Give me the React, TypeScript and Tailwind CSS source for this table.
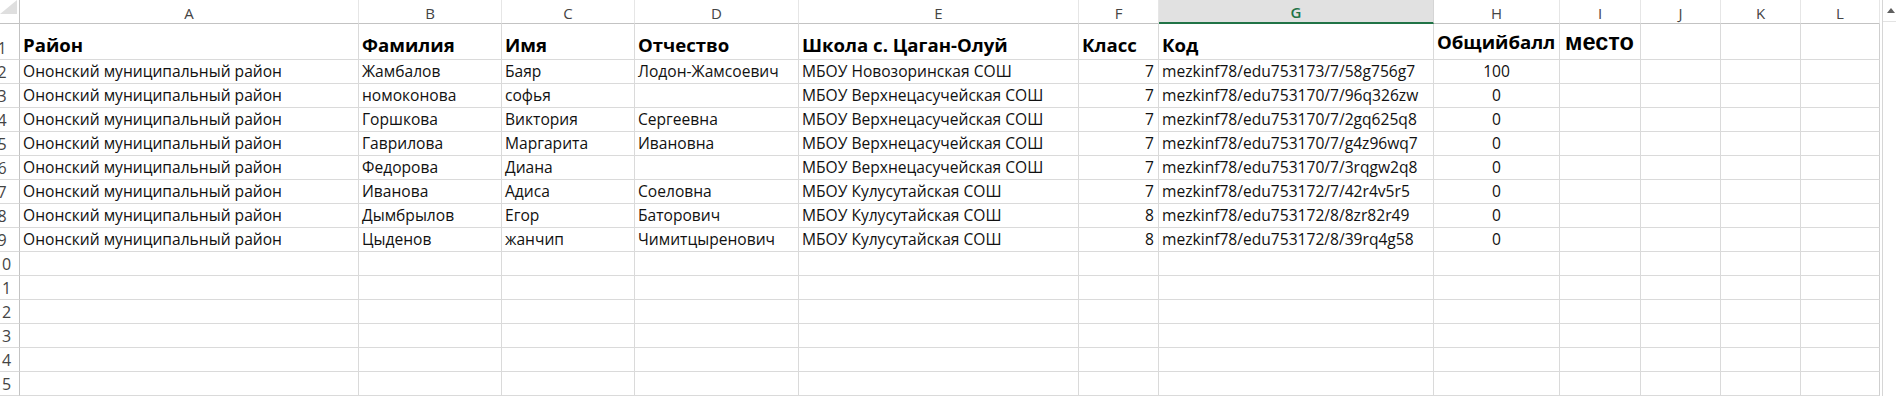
import React from "react";

const cols = ["A", "B", "C", "D", "E", "F", "G", "H", "I", "J", "K", "L"];

type Row = [string, string, string, string, string, string, string, string];

const rows: Row[] = [
  ["Ононский муниципальный район", "Жамбалов", "Баяр", "Лодон-Жамсоевич", "МБОУ Новозоринская СОШ", "7", "mezkinf78/edu753173/7/58g756g7", "100"],
  ["Ононский муниципальный район", "номоконова", "софья", "", "МБОУ Верхнецасучейская СОШ", "7", "mezkinf78/edu753170/7/96q326zw", "0"],
  ["Ононский муниципальный район", "Горшкова", "Виктория", "Сергеевна", "МБОУ Верхнецасучейская СОШ", "7", "mezkinf78/edu753170/7/2gq625q8", "0"],
  ["Ононский муниципальный район", "Гаврилова", "Маргарита", "Ивановна", "МБОУ Верхнецасучейская СОШ", "7", "mezkinf78/edu753170/7/g4z96wq7", "0"],
  ["Ононский муниципальный район", "Федорова", "Диана", "", "МБОУ Верхнецасучейская СОШ", "7", "mezkinf78/edu753170/7/3rqgw2q8", "0"],
  ["Ононский муниципальный район", "Иванова", "Адиса", "Соеловна", "МБОУ Кулусутайская СОШ", "7", "mezkinf78/edu753172/7/42r4v5r5", "0"],
  ["Ононский муниципальный район", "Дымбрылов", "Егор", "Баторович", "МБОУ Кулусутайская СОШ", "8", "mezkinf78/edu753172/8/8zr82r49", "0"],
  ["Ононский муниципальный район", "Цыденов", "жанчип", "Чимитцыренович", "МБОУ Кулусутайская СОШ", "8", "mezkinf78/edu753172/8/39rq4g58", "0"],
];

const headers = ["Район", "Фамилия", "Имя", "Отчество", "Школа с. Цаган-Олуй", "Класс", "Код", "Общийбалл"];

function RowNum({ n }: { n: number }) {
  return (
    <div className="flex items-end overflow-hidden border-r border-b border-r-[#c3c3c3] border-b-[#dadada] bg-white">
      <div className="ml-[-18px] w-[40px] shrink-0 pb-[1px] text-center text-[16px] leading-[20px] text-[#444]">{n}</div>
    </div>
  );
}

function Cell({ text, kind }: { text: string; kind: "l" | "r" | "c" }) {
  const align = kind === "r" ? "justify-end pr-[4px]" : kind === "c" ? "justify-center" : "justify-start pl-[3px]";
  return (
    <div className={`flex items-end whitespace-nowrap border-r border-b border-[#dadada] pb-[2px] text-[15.6px] leading-[20px] text-[#111] ${align}`}>
      {text}
    </div>
  );
}

export default function App() {
  return (
    <div className="flex h-[396px] w-[1896px] overflow-hidden bg-white" style={{ fontFamily: '"Open Sans", "Noto Sans", sans-serif' }}>
      <div className="grid grid-cols-[20px_339px_143px_133px_164px_280px_80px_275px_126px_81px_80px_80px_79px] grid-rows-[24px_36px_repeat(14,24px)]">
        {/* corner */}
        <div className="flex items-end justify-end border-r border-b border-r-[#c3c3c3] border-b-[#c3c3c3] bg-white">
          <svg width="19" height="19" viewBox="0 0 19 19" className="mb-[4px]">
            <polygon points="17,0 17,14 0,14" fill="#dfdfdf" />
          </svg>
        </div>
        {cols.map((c) =>
          c === "G" ? (
            <div key={c} className="flex items-center justify-center border-r border-r-[#d5d5d5] border-b-2 border-b-[#217346] bg-[#e1e1e1] pt-[2px] text-[15px] font-semibold text-[#217346]">
              {c}
            </div>
          ) : (
            <div key={c} className="flex items-center justify-center border-r border-b border-r-[#e6e6e6] border-b-[#c3c3c3] bg-white pt-[3px] text-[15px] text-[#444]">
              {c}
            </div>
          )
        )}

        {/* row 1 */}
        <RowNum n={1} />
        {headers.map((h, i) => (
          <div
            key={h}
            className={`flex items-end whitespace-nowrap border-r border-b border-[#dadada] pl-[3px] text-[18.6px] font-bold leading-[24px] text-black ${i === 7 ? "pb-[5px]" : "pb-[2px]"}`}
          >
            {h}
          </div>
        ))}
        <div
          className="flex items-end whitespace-nowrap border-r border-b border-[#dadada] pb-[5px] pl-[5px] text-[23.5px] font-bold leading-[24px] text-black"
          style={{ fontFamily: '"Liberation Sans", Arial, sans-serif' }}
        >
          место
        </div>
        <div className="border-r border-b border-[#dadada]" />
        <div className="border-r border-b border-[#dadada]" />
        <div className="border-r border-b border-r-[#cfcfcf] border-b-[#dadada]" />

        {/* data rows */}
        {rows.map((r, ri) => (
          <React.Fragment key={ri}>
            <RowNum n={ri + 2} />
            <Cell text={r[0]} kind="l" />
            <Cell text={r[1]} kind="l" />
            <Cell text={r[2]} kind="l" />
            <Cell text={r[3]} kind="l" />
            <Cell text={r[4]} kind="l" />
            <Cell text={r[5]} kind="r" />
            <Cell text={r[6]} kind="l" />
            <Cell text={r[7]} kind="c" />
            <Cell text="" kind="l" />
            <Cell text="" kind="l" />
            <Cell text="" kind="l" />
            <div className="border-r border-b border-r-[#cfcfcf] border-b-[#dadada]" />
          </React.Fragment>
        ))}

        {/* empty rows */}
        {[10, 11, 12, 13, 14, 15].map((n) => (
          <React.Fragment key={n}>
            <RowNum n={n} />
            {cols.map((c) =>
              c === "L" ? (
                <div key={c} className="border-r border-b border-r-[#cfcfcf] border-b-[#dadada]" />
              ) : (
                <div key={c} className="border-r border-b border-[#dadada]" />
              )
            )}
          </React.Fragment>
        ))}
      </div>
      <div className="w-[2px] shrink-0 bg-white" />
      <div className="flex w-[14px] shrink-0 flex-col border-l border-[#d6d6d6] bg-white">
        <div className="flex h-[22px] items-center justify-center border-b border-[#e3e3e3] pl-[2px]">
          <svg width="8" height="5" viewBox="0 0 8 5">
            <polygon points="4,0 8,5 0,5" fill="#5f5f5f" />
          </svg>
        </div>
      </div>
    </div>
  );
}
